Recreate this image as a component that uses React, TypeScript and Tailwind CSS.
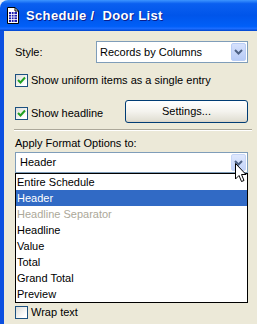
import React from "react";

const items = [
  "Entire Schedule",
  "Header",
  "Headline Separator",
  "Headline",
  "Value",
  "Total",
  "Grand Total",
  "Preview",
];

const Check = ({ checked }: { checked: boolean }) => (
  <div className="w-[13px] h-[13px] border border-[#1c5180] bg-[linear-gradient(135deg,#dcdcd7_0%,#ffffff_80%)] flex items-center justify-center shrink-0">
    {checked && (
      <svg width="9" height="9" viewBox="0 0 9 9">
        <path d="M1 4 L3.5 6.5 L8 1.5" stroke="#21a121" strokeWidth="2" fill="none" />
      </svg>
    )}
  </div>
);

const ComboButton = () => (
  <div className="w-[15px] h-[18px] m-[1px] rounded-[2px] border border-[#b9cdf6] bg-[linear-gradient(to_bottom,#d6e1fc,#b7cbf7)] flex items-center justify-center shrink-0">
    <svg width="9" height="6" viewBox="0 0 9 6">
      <path d="M1 1 L4.5 4.5 L8 1" stroke="#4d6185" strokeWidth="2" fill="none" />
    </svg>
  </div>
);

export default function App() {
  return (
    <div className="w-[257px] h-[324px] overflow-hidden bg-[#e4ecf7] flex flex-col font-['Liberation_Sans',Arial,sans-serif] text-[11px] leading-[13px] text-black relative">
      {/* title bar */}
      <div className="h-[31px] shrink-0 rounded-tl-[8px] bg-[linear-gradient(to_bottom,#3d95ff_0%,#0a5ff0_12%,#0055ea_50%,#005ff8_85%,#1a6cff_92%,#0044cc_100%)] flex items-center pl-[7px]">
        <svg width="12" height="17" viewBox="0 0 12 17">
          <path d="M0.5 0.5 H8 L11.5 4 V16.5 H0.5 Z" fill="#fff" stroke="#000" />
          <path d="M8 0.5 V4 H11.5" fill="none" stroke="#000" />
          <rect x="2" y="5" width="8" height="10" fill="#1b1bb0" />
          <path d="M2 7.5 H10 M2 10 H10 M2 12.5 H10 M4.5 5 V15 M7 5 V15" stroke="#fff" strokeWidth="0.8" />
        </svg>
        <span className="ml-[7px] text-white font-bold text-[13px] leading-[16px] whitespace-pre tracking-[0.35px] [text-shadow:1px_1px_0_#0a1e8c]">
          Schedule /  Door List
        </span>
      </div>

      {/* body */}
      <div className="flex-1 border-l-4 border-[#0b4fe0] bg-[#ece9d8] pl-[11px] pr-[9px] flex flex-col">
        <div className="mt-[10px] flex items-center justify-between">
          <span>Style:</span>
          <div className="w-[152px] h-[22px] border border-[#7f9db9] bg-white flex items-center">
            <span className="flex-1 pl-[3px]">Records by Columns</span>
            <ComboButton />
          </div>
        </div>

        <div className="mt-[11px] h-[13px] flex items-center gap-[3px]">
          <Check checked />
          <span>Show uniform items as a single entry</span>
        </div>

        <div className="mt-[13px] flex items-start justify-between">
          <div className="mt-[7px] h-[13px] flex items-center gap-[3px]">
            <Check checked />
            <span>Show headline</span>
          </div>
          <button className="w-[123px] h-[23px] rounded-[3px] border border-[#003c74] bg-[linear-gradient(to_bottom,#ffffff_0%,#f4f3ee_50%,#e3e1d6_90%,#d6d0c5_100%)] text-[11px] leading-[13px] flex items-center justify-center">
            Settings...
          </button>
        </div>

        <div className="mt-[6px] mr-[-4px] ml-[-1px] h-[1px] bg-[#aca899]" />
        <div className="mr-[-4px] ml-[-1px] h-[1px] bg-white" />

        <div className="mt-[6px]">Apply Format Options to:</div>

        <div className="mt-[2px] h-[21px] border border-[#7f9db9] bg-white flex items-center">
          <span className="flex-1 pl-[4px]">Header</span>
          <div className="w-[15px] h-[17px] m-[1px] rounded-[2px] border border-[#c6d6f8] bg-[linear-gradient(to_bottom,#dfe8fd,#c3d4fa)] flex items-center justify-center">
            <svg width="9" height="6" viewBox="0 0 9 6">
              <path d="M1 1 L4.5 4.5 L8 1" stroke="#4d6185" strokeWidth="2" fill="none" />
            </svg>
          </div>
        </div>

        <div className="border border-black bg-white flex flex-col">
          {items.map((item, i) => (
            <div
              key={item}
              className={
                "h-[16px] pl-[1px] flex items-center " +
                (i === 1
                  ? "bg-[#316ac5] text-white"
                  : i === 2
                  ? "text-[#aca899]"
                  : "text-black")
              }
            >
              {item}
            </div>
          ))}
        </div>

        <div className="mt-[3px] h-[13px] flex items-center gap-[3px]">
          <Check checked={false} />
          <span>Wrap text</span>
        </div>
      </div>

      {/* mouse cursor */}
      <svg className="absolute left-[235px] top-[163px]" width="12" height="20" viewBox="0 0 12 20">
        <path
          d="M0.5 0.5 L0.5 16 L4 12.5 L6.5 18.5 L9 17.5 L6.5 11.5 L11 11.5 Z"
          fill="#fff"
          stroke="#000"
        />
      </svg>
    </div>
  );
}
